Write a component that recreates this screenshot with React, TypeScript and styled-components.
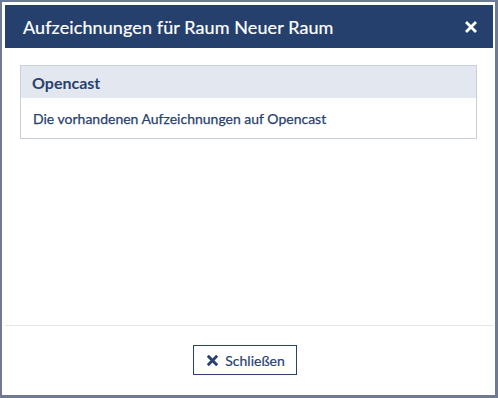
import React from 'react';
import styled, { createGlobalStyle } from 'styled-components';

const GlobalStyle = createGlobalStyle`
  html, body {
    margin: 0;
    padding: 0;
    background-color: #6e7b93;
    font-family: Lato, "Noto Sans", sans-serif;
  }
`;

const Backdrop = styled.div`
  width: 498px;
  height: 398px;
  padding: 2px 3px 3px 2px;
  box-sizing: border-box;
`;

const Dialog = styled.div`
  background-color: #ffffff;
  height: 100%;
  padding: 3px 2px 0 3px;
  box-sizing: border-box;
  display: flex;
  flex-direction: column;
`;

const TitleBar = styled.header`
  background-color: #26406e;
  height: 43px;
  display: flex;
  align-items: center;
  justify-content: space-between;
  padding: 0 16px 0 18px;
  box-sizing: border-box;
  color: #ffffff;
`;

const Title = styled.h1`
  margin: 0;
  font-size: 18px;
  font-weight: 400;
  letter-spacing: 0.1px;
  -webkit-text-stroke: 0.2px #ffffff;
`;

const CloseButton = styled.span`
  display: flex;
  width: 12px;
  height: 12px;
  cursor: pointer;
`;

const Content = styled.div`
  flex: 1;
  padding: 17px 16px 0 15px;
`;

const Panel = styled.section`
  border: 1px solid #c9d0db;
`;

const PanelHeader = styled.div`
  background-color: #e3e7ef;
  height: 32px;
  display: flex;
  align-items: center;
  padding: 0 11px;
  font-size: 16px;
  font-weight: 700;
  color: #28416f;
`;

const PanelBody = styled.div`
  height: 40px;
  display: flex;
  align-items: center;
  padding: 0 12px;
  font-size: 14px;
  color: #28416f;
  -webkit-text-stroke: 0.25px #28416f;
`;

const Footer = styled.footer`
  border-top: 1px solid #e6e6e6;
  height: 70px;
  display: flex;
  justify-content: center;
  padding: 19px 8px 0 0;
  box-sizing: border-box;
`;

const Button = styled.button`
  width: 104px;
  height: 30px;
  border: 1px solid #28416f;
  background: #ffffff;
  color: #28416f;
  font-family: Lato, "Noto Sans", sans-serif;
  font-size: 14px;
  display: flex;
  align-items: center;
  justify-content: center;
  gap: 7px;
  padding: 0 0 0 2px;
  cursor: pointer;
  -webkit-text-stroke: 0.2px #28416f;
`;

const Cross: React.FC<{ color: string; size: number; weight: number }> = ({ color, size, weight }) => (
  <svg width={size} height={size} viewBox="0 0 12 12">
    <path d="M2 2 L10 10 M10 2 L2 10" stroke={color} strokeWidth={weight} strokeLinecap="square" />
  </svg>
);

const App: React.FC = () => {
  return (
    <Backdrop>
      <GlobalStyle />
      <Dialog>
        <TitleBar>
          <Title>Aufzeichnungen für Raum Neuer Raum</Title>
          <CloseButton>
            <Cross color="#ffffff" size={12} weight={2.8} />
          </CloseButton>
        </TitleBar>
        <Content>
          <Panel>
            <PanelHeader>Opencast</PanelHeader>
            <PanelBody>Die vorhandenen Aufzeichnungen auf Opencast</PanelBody>
          </Panel>
        </Content>
        <Footer>
          <div>
            <Button>
              <Cross color="#28416f" size={11} weight={3.2} />
              Schließen
            </Button>
          </div>
        </Footer>
      </Dialog>
    </Backdrop>
  );
};

export default App;
